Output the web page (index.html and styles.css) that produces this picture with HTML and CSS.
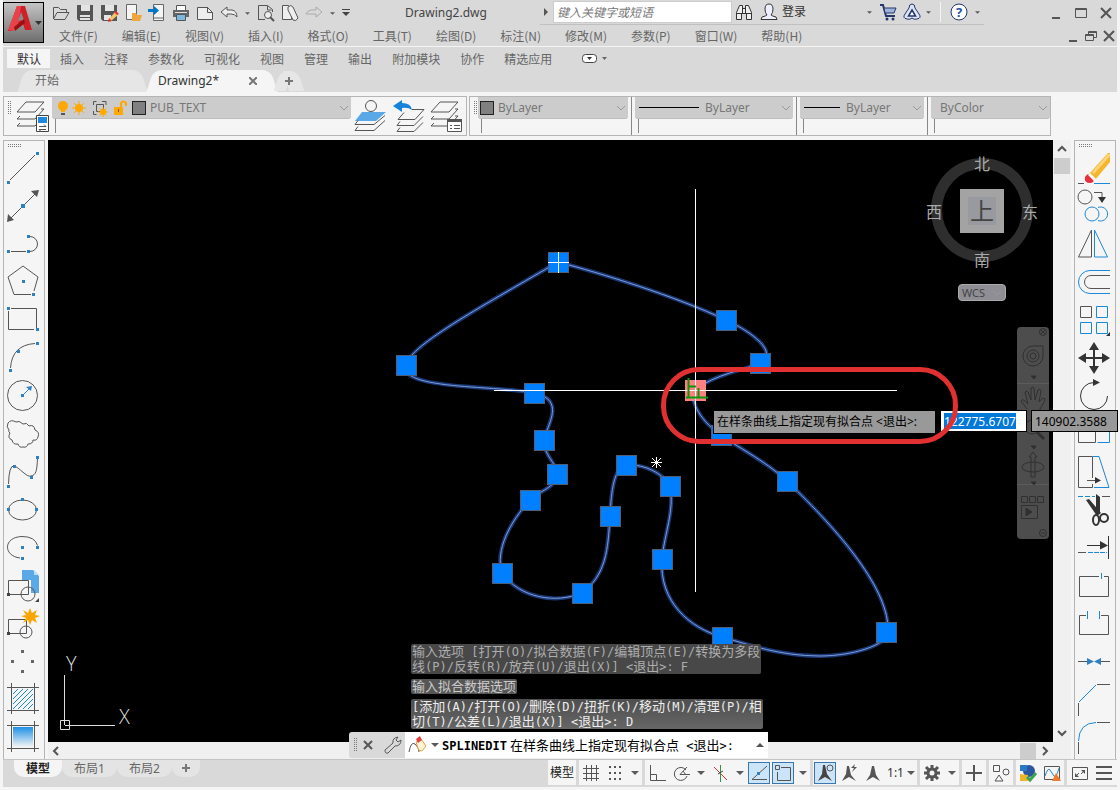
FILE: index.html
```
<!DOCTYPE html>
<html lang="zh-CN">
  <head>
    <meta charset="UTF-8" />
    <meta name="viewport" content="width=device-width, initial-scale=1.0" />
    <title>Drawing2.dwg</title>
    <link rel="stylesheet" href="styles.css">
  </head>
  <body>
    <!-- shared symbols -->
    <svg class="defs" aria-hidden="true">
      <symbol id="tri" viewBox="0 0 8 8"><path d="M0 2h8L4 6z" fill="#5a5a5a" /></symbol>
      <symbol id="chev" viewBox="0 0 10 10"><path d="M1 3l4 4 4-4" fill="none" stroke="#9a9a9a" /></symbol>
      <symbol id="grip" viewBox="0 0 21 21"><rect x=".5" y=".5" width="20" height="20" fill="#0080ff" stroke="#4f5f78" /></symbol>
      <symbol id="sheets" viewBox="0 0 34 34">
        <path class="ln" d="M10 3h18l-9 10H1zM4 17L1 20h18l9-10h-3M4 24l-3 3h18l9-10h-3" />
      </symbol>
      <linearGradient id="sky" x1="0" y1="0" x2="0" y2="1">
        <stop offset="0" stop-color="#1e90e8" />
        <stop offset="1" stop-color="#f5f5f5" />
      </linearGradient>
      <path id="spline" d="M558 262C600 273 675 296 726 320C750 331 780 352 760 363C745 370 715 374 695 390C690 397 696 418 721 435C735 446 763 459 787 481C840 532 890 590 888 632C888 645 852 656 820 656C780 656 750 645 722 637C690 628 659 602 662 559C664 535 675 510 670 486C663 474 646 464 626 465C612 468 611 500 610 516C608 550 606 575 582 593C555 604 520 598 502 573C495 550 510 522 530 500C540 490 556 488 557 474C557 463 543 455 544 440C545 430 562 407 545 397L534 393C495 385 398 390 406 365C409 345 490 302 558 262z" />
    </svg>

    <div class="app">
      <header class="top">
        <button class="logo" aria-label="应用程序菜单">
          <svg width="39" height="39" viewBox="0 0 39 39">
            <path d="M4 28L13 3h8l7 24h-7l-2-6-8 2-2 5z" fill="#cf2027" />
            <path d="M13 3h4l-3 20-5 5-5-1z" fill="#e8434a" />
            <path d="M17 9l3 8-6 1z" fill="#8a8a8a" />
            <path d="M10 24l10-8 1 4-10 8z" fill="#9c1015" />
            <path d="M31 18h7l-3.500 4z" fill="#333" />
          </svg>
        </button>

        <div class="top-rows">
          <div class="titlebar">
            <div class="quick">
              <button aria-label="打开"><svg class="i20" viewBox="0 0 20 20"><path class="ln" d="M2.500 16V4.500h5l2 2h6V9M2.500 16L6 9.500h12L14 16.500H3" /></svg></button>
              <button aria-label="保存"><svg class="i20" viewBox="0 0 20 20"><path d="M2 2h16v16H4l-2-2z" fill="#555" /><path d="M6 2h9v6H6zM5 12h10v5H5z" fill="#e4e4e4" /><path d="M5 14.500h10" stroke="#555" /></svg></button>
              <button aria-label="另存为"><svg class="i20" viewBox="0 0 20 20"><path d="M2 2h16v16H4l-2-2z" fill="#555" /><path d="M6 2h9v6H6zM5 12h7v5H5z" fill="#e4e4e4" /><path d="M10 16l6-7 3 3-7 6z" fill="#f5c36a" /><path d="M9 19l1-4 3 3zM15 9l2-1 3 3-2 1z" fill="#d33" /></svg></button>
              <button aria-label="从移动设备打开"><svg class="i20" viewBox="0 0 20 20"><path d="M3.500 1.500h10v15h-10z" fill="#f4f4f4" stroke="#666" /><path d="M9 18v-8h4l1 2h5l-2 6z" fill="#f0a63a" /></svg></button>
              <button aria-label="保存到移动设备"><svg class="i20" viewBox="0 0 20 20"><path d="M6.500 1.500h10v16h-10z" fill="#f4f4f4" stroke="#666" /><path d="M7 15h9" stroke="#666" /><path d="M1 6h6V3l5 4.500L7 12V9H1z" fill="#0078c8" /></svg></button>
              <button aria-label="打印"><svg class="i20" viewBox="0 0 20 20"><path d="M5.500 2.500h9v5h-9z" fill="#fff" stroke="#555" /><path d="M2 7h16v7H2z" fill="#666" /><path d="M4 9.500h12" stroke="#ddd" /><path d="M5.500 11.500h9v6h-9z" fill="#7db7e0" stroke="#555" /></svg></button>
              <button aria-label="新建"><svg class="i20" viewBox="0 0 20 20"><path d="M2.500 4.500h10l5 5v7h-15z" fill="#eee" stroke="#555" /><path class="ln" d="M12.500 4v5.500h5" /></svg></button>
              <button aria-label="放弃"><svg class="i20" viewBox="0 0 20 20"><path d="M2 9l6-5v3h5q5 1 5 7-2-3-6-3H8v3z" fill="#eee" stroke="#555" /></svg></button>
              <button class="dd" aria-label="放弃列表"><svg class="i5"><use href="#tri" /></svg></button>
              <button aria-label="打印预览"><svg class="i20" viewBox="0 0 20 20"><path d="M2.500 16V2.500h9l5 4V9M2 16.500h7M11.500 3v4h4" fill="none" stroke="#555" /><circle cx="12" cy="12" r="3.500" fill="#eee" stroke="#555" /><path d="M14 14l4 4" stroke="#555" stroke-width="2" /></svg></button>
              <button aria-label="发布"><svg class="i20" viewBox="0 0 20 20"><path d="M2.500 2.500h6l3 3v11h-9z" fill="#eee" stroke="#555" /><path d="M8 4q3-3 5 0l5 11q-2 4-5 2L8 7z" fill="#eee" stroke="#555" /></svg></button>
              <button aria-label="重做"><svg class="i20" viewBox="0 0 20 20"><path d="M18 9l-6-5v3H7Q3 8 2 11h10v3z" fill="none" stroke="#aaa" /></svg></button>
              <button class="dd" aria-label="重做列表"><svg class="i5"><use href="#tri" /></svg></button>
              <button class="dd" aria-label="自定义"><svg class="i8" viewBox="0 0 8 8"><path d="M0 0h8v1H0zM0 3h8L4 7z" fill="#444" /></svg></button>
            </div>
            <div class="title">Drawing2.dwg</div>
            <div class="info">
              <button class="dd" aria-label="展开搜索"><svg class="i8" viewBox="0 0 8 8"><path d="M2 0l4 4-4 4z" fill="#555" /></svg></button>
              <input class="search" type="text" aria-label="搜索" placeholder="键入关键字或短语" />
              <button aria-label="查找"><svg class="i20" viewBox="0 0 20 20"><path d="M5.500 3.500h3v3h3v-3h3l3 7v7h-5v-6h-5v6h-5v-7z" fill="#eee" stroke="#333" /><path d="M3 11.500h5M12 11.500h5M8.500 6v5M11.500 6v5" stroke="#333" /></svg></button>
              <button class="login"><svg class="i20" viewBox="0 0 20 20"><path d="M6 7q0-5 4-5t4 5q0 4-2 6 1 1 5 2l1 2.500H2L3 15q4-1 5-2-2-2-2-6z" fill="#eef" stroke="#333" /></svg>登录</button>
              <button class="dd login-dd" aria-label="帐户"><svg class="i5"><use href="#tri" /></svg></button>
              <button aria-label="商店"><svg class="i20" viewBox="0 0 20 20"><path d="M2 3h3l3 11h9" fill="none" stroke="#24366b" stroke-width="2" /><path d="M6 6h12l-2 5H7z" fill="#9fb2dc" stroke="#24366b" /><circle cx="9" cy="17" r="1.500" fill="#24366b" /><circle cx="15" cy="17" r="1.500" fill="#24366b" /></svg></button>
              <button aria-label="Autodesk App"><svg class="i20" viewBox="0 0 20 20"><path d="M10 2q3 0 3 4l4 6q3 4-2 5-3 1-5-1-2 2-5 1-5-1-2-5l4-6q0-4 3-4z" fill="#dbe3f5" stroke="#24366b" /><path d="M10 8l3.500 6h-7z" fill="#fff" stroke="#24366b" stroke-width="1.500" /></svg></button>
              <button class="dd narrow" aria-label="应用列表"><svg class="i5"><use href="#tri" /></svg></button>
              <span class="bar"></span>
              <button aria-label="帮助"><svg class="i20" viewBox="0 0 20 20"><circle cx="10" cy="10" r="8" fill="#fff" stroke="#24366b" /><text class="qmark" x="10" y="15" text-anchor="middle">?</text></svg></button>
              <button class="dd" aria-label="帮助列表"><svg class="i5"><use href="#tri" /></svg></button>
            </div>
            <div class="win">
              <button aria-label="最小化"><svg class="i14" viewBox="0 0 14 14"><path class="thick" d="M3 12h8" /></svg></button>
              <button aria-label="最大化"><svg class="i14" viewBox="0 0 14 14"><path class="ln" d="M1.500 2.500h11v9h-11zM1.500 3.500h11" /></svg></button>
              <button aria-label="关闭"><svg class="i14" viewBox="0 0 14 14"><path class="thick" d="M2 2l10 10M12 2L2 12" /></svg></button>
            </div>
          </div>

          <nav class="menubar">
            <a href="#">文件(F)</a>
            <a href="#">编辑(E)</a>
            <a href="#">视图(V)</a>
            <a href="#">插入(I)</a>
            <a href="#">格式(O)</a>
            <a href="#">工具(T)</a>
            <a href="#">绘图(D)</a>
            <a href="#">标注(N)</a>
            <a href="#">修改(M)</a>
            <a href="#">参数(P)</a>
            <a href="#">窗口(W)</a>
            <a href="#">帮助(H)</a>
            <div class="win small">
              <button aria-label="最小化图形"><svg class="i14" viewBox="0 0 14 14"><path class="thick" d="M3 12h8" /></svg></button>
              <button aria-label="还原图形"><svg class="i14" viewBox="0 0 14 14"><path class="ln" d="M4.500 5V2.500h8v6H10M1.500 5.500h8v6h-8zM1.500 6.500h8M4.500 3.500h8" /></svg></button>
              <button aria-label="关闭图形"><svg class="i14" viewBox="0 0 14 14"><path class="thick" d="M2 2l10 10M12 2L2 12" /></svg></button>
            </div>
          </nav>
        </div>
      </header>

      <nav class="ribbon">
        <a class="on" href="#">默认</a>
        <a href="#">插入</a>
        <a href="#">注释</a>
        <a href="#">参数化</a>
        <a href="#">可视化</a>
        <a href="#">视图</a>
        <a href="#">管理</a>
        <a href="#">输出</a>
        <a href="#">附加模块</a>
        <a href="#">协作</a>
        <a href="#">精选应用</a>
        <button class="ribbon-min" aria-label="最小化功能区">
          <svg width="26" height="10" viewBox="0 0 26 10"><rect x=".5" y=".5" width="14" height="8" rx="3" fill="#fff" stroke="#444" /><path d="M5 3h5L7.500 6z" fill="#333" /><path d="M20 3h5l-2.500 3z" fill="#666" /></svg>
        </button>
      </nav>

      <nav class="files">
        <a class="file start" href="#">开始</a>
        <a class="file on" href="#">Drawing2*</a>
        <button class="file-x" aria-label="关闭文件"><svg class="i8" viewBox="0 0 8 8"><path class="thick soft" d="M0 0l8 8M8 0L0 8" /></svg></button>
        <button class="file add" aria-label="新图形"><svg class="i8" viewBox="0 0 8 8"><path class="thick soft" d="M4 0v8M0 4h8" /></svg></button>
      </nav>

      <div class="props">
        <div class="panel layers">
          <span class="dots v"></span>
          <button aria-label="图层特性">
            <svg class="i34" viewBox="0 0 34 34"><use href="#sheets" width="34" height="34" /><path d="M20.500 16.500h12v16h-12z" fill="#fff" stroke="#444" /><path d="M22 18h9v6h-9z" fill="#1e88e0" /><path class="ln" d="M23 27.500h7l-2-2M30 30.500h-7l2 2" /></svg>
          </button>
          <div class="drop layer">
            <div class="drop-face">
              <svg width="74" height="18" viewBox="0 0 74 18">
                <circle cx="9" cy="6" r="5" fill="#ffa800" /><path d="M7 10h4v2H7z" fill="#ffa800" /><path d="M7 13h4v2H7z" fill="#555" />
                <circle cx="25" cy="8" r="4" fill="#ffa800" /><path d="M25 1v14M18 8h14M20 3l10 10M30 3L20 13" stroke="#ffa800" />
                <path class="ln" d="M39.500 5V1.500h3M48 1.500h4V5M39.500 11v3.500h3M42.500 4.500h7v7h-7z" /><circle cx="49" cy="12" r="3" fill="#ffa800" /><path d="M49 7v10M44 12h10M45.500 8.500l7 7M52.500 8.500l-7 7" stroke="#ffa800" />
                <path d="M60 7h9v8h-9z" fill="#ffa800" /><path d="M67 7V3q2-3 5 0v3" fill="none" stroke="#ffa800" stroke-width="2" /><path d="M64 9h1v3h-1z" fill="#855" />
              </svg>
              <span class="swatch"></span>
              <select aria-label="图层"><option>PUB_TEXT</option></select>
              <svg class="i10"><use href="#chev" /></svg>
            </div>
          </div>
          <button aria-label="置为当前">
            <svg class="i34" viewBox="0 0 34 34"><path d="M8 13h24l-10 9H1z" fill="#5aa9e6" /><path class="ln" d="M4 21.500l-3 4h19l11-9M4 27.500l-3 4h19l11-10" /><circle cx="17" cy="7" r="5.500" fill="#f5f5f5" stroke="#555" /></svg>
          </button>
          <button aria-label="上一个图层">
            <svg class="i34" viewBox="0 0 34 34"><path class="ln" d="M20 10.500h12l-9 10H6l6-7M8 22.500l-3 4h17l9-9M8 28.500l-3 4h17l9-9" /><path d="M1 7l9-6v3q9 0 10 7-4-3-10-2v4z" fill="#1583dc" /></svg>
          </button>
          <button aria-label="图层状态">
            <svg class="i34" viewBox="0 0 34 34"><use href="#sheets" width="34" height="34" /><path d="M17.500 20.500h14v12h-14z" fill="#fff" stroke="#555" /><path d="M17 20h15v3H17z" fill="#555" /><path d="M20 26.500h2M20 29.500h2M24 26.500h6M24 29.500h6" stroke="#555" /></svg>
          </button>
        </div>

        <div class="panel styles">
          <span class="dots v"></span>
          <div class="drop color">
            <div class="drop-face"><span class="swatch"></span><select aria-label="颜色"><option>ByLayer</option></select><svg class="i10"><use href="#chev" /></svg></div>
          </div>
          <div class="drop ltype">
            <div class="drop-face"><span class="rule"></span><select aria-label="线型"><option>ByLayer</option></select><svg class="i10"><use href="#chev" /></svg></div>
          </div>
          <div class="drop lweight">
            <div class="drop-face"><span class="rule short"></span><select aria-label="线宽"><option>ByLayer</option></select><svg class="i10"><use href="#chev" /></svg></div>
          </div>
          <div class="drop pstyle">
            <div class="drop-face"><select aria-label="打印样式"><option>ByColor</option></select><svg class="i10"><use href="#chev" /></svg></div>
          </div>
        </div>
      </div>

      <main class="work">
        <div class="tools left">
          <span class="dots h"></span>
          <button aria-label="直线"><svg viewBox="0 0 34 38"><path class="ln" d="M4 31L29 6" /><path class="pt" d="M1 32h3v3H1zM30 3h3v3h-3z" /></svg></button>
          <button aria-label="构造线"><svg viewBox="0 0 34 38"><path class="ln" d="M3 33L30 6" /><path d="M1 35l1-8 6 6zM33 3l-8 1 6 6z" fill="#555" /><path class="pt" d="M15 17h4v4h-4z" /></svg></button>
          <button aria-label="多段线"><svg viewBox="0 0 34 38"><path class="ln" d="M5 26.500h15M24 11.500a7.500 7.500 0 0 1 0 15" /><path class="pt" d="M1 25h3v3H1zM21 25h3v3h-3zM21 10h3v3h-3z" /></svg></button>
          <button aria-label="多边形"><svg viewBox="0 0 34 38"><path class="ln" d="M17 3l15 11-4 14M25 31.500H8L2 14 17 3" /><path class="pt" d="M16 17h3v3h-3zM26 30h3v3h-3z" /></svg></button>
          <button aria-label="矩形"><svg viewBox="0 0 34 38"><path class="ln" d="M5 7.500h25.500V27M28 28.500H2.500V10" /><path class="pt" d="M1 6h3v3H1zM30 27h3v3h-3z" /></svg></button>
          <button aria-label="圆弧"><svg viewBox="0 0 34 38"><path class="ln" d="M29 4.500Q6 6 4.500 29" /><path class="pt" d="M30 3h3v3h-3zM11 11h3v3h-3zM3 30h3v3H3z" /></svg></button>
          <button aria-label="圆"><svg viewBox="0 0 34 38"><circle class="ln" cx="16.500" cy="18.500" r="15" /><path class="bl" d="M17 18l6-6" /><path class="pt" d="M15 17h3v3h-3zM26 9l-1 5-5-4z" /></svg></button>
          <button aria-label="修订云线"><svg viewBox="0 0 34 38"><path class="ln" d="M3 15Q0 12 2 8q3-4 8-1 3-2 7 2 4-2 6 2 5-2 6 4 5 2 3 7-1 4-5 3 0 4-5 4-1 4-5 3-4 1-5-3-5 1-6-4-5-2-2-7-2-1-1-3z" /></svg></button>
          <button aria-label="样条曲线"><svg viewBox="0 0 34 38"><path class="ln" d="M2.500 31Q3 12 8 13c5 1 13 12 17 10 5-1 6-5 6.500-18" /><path class="pt" d="M1 32h3v3H1zM7 12h3v3H7zM24 23h3v3h-3zM30 3h3v3h-3z" /></svg></button>
          <button aria-label="椭圆"><svg viewBox="0 0 34 38"><ellipse class="ln" cx="16.500" cy="19" rx="14" ry="10" /><path class="pt" d="M1 17h3v3H1zM15 7h3v3h-3zM29 17h3v3h-3z" /></svg></button>
          <button aria-label="椭圆弧"><svg viewBox="0 0 34 38"><path class="ln" d="M14 29C-3 27-3 8 16 7.500q13 0 15.500 9" /><path class="pt" d="M15 17h3v3h-3zM30 17h3v3h-3zM15 28h3v3h-3z" /></svg></button>
          <button aria-label="插入块"><svg viewBox="0 0 34 38"><path d="M16 3h11l6 6v17h-8V13h-9z" fill="#5aa9e6" /><path d="M28 3l5 5h-5z" fill="#bcdcf5" /><path class="ln" d="M2.500 13.500h20v14h-20z" /><circle class="ln" cx="22" cy="27" r="7" /><path d="M1 26h3v3H1zM33 31v4h-4z" fill="#444" /></svg></button>
          <button aria-label="创建块"><svg viewBox="0 0 34 38"><path class="ln" d="M2.500 14.500h18v14h-18z" /><circle class="ln" cx="20" cy="27" r="6" /><path d="M1 27h3v3H1z" fill="#444" /><path d="M24 3l2 5 5-3-2 5 5 1-5 2 2 5-5-3-2 5-2-5-5 3 3-5-5-2 5-1-3-5 5 3z" fill="#f9a602" /></svg></button>
          <button aria-label="点"><svg viewBox="0 0 34 38"><path d="M15 7h3v3h-3zM5 17h3v3H5zM25 17h3v3h-3zM15 27h3v3h-3z" fill="#666" /></svg></button>
          <button aria-label="图案填充"><svg viewBox="0 0 34 38"><path class="ln" d="M5.500 2v31M28.500 2v31M1 6.500h32M1 29.500h32" /><path class="bl" d="M7 13l5-5M7 18L17 8M7 23L22 8M7 28L27 8M12 28l15-15M17 28l10-10M22 28l5-5" /></svg></button>
          <button aria-label="渐变色"><svg viewBox="0 0 34 38"><path d="M7 8h20v20H7z" fill="url(#sky)" /><path class="ln" d="M5.500 2v31M28.500 2v31M1 6.500h32M1 29.500h32" /></svg></button>
        </div>

        <div class="view">
          <div class="canvas">
            <svg class="drawing" width="1005" height="602" viewBox="48 140 1005 602">
              <use href="#spline" class="glow" />
              <use href="#spline" class="core" />
              <g>
                <use href="#grip" x="548" y="252" width="21" height="21" />
                <use href="#grip" x="716" y="310" width="21" height="21" />
                <use href="#grip" x="750" y="353" width="21" height="21" />
                <use href="#grip" x="711" y="425" width="21" height="21" />
                <use href="#grip" x="777" y="471" width="21" height="21" />
                <use href="#grip" x="876" y="622" width="21" height="21" />
                <use href="#grip" x="712" y="627" width="21" height="21" />
                <use href="#grip" x="652" y="549" width="21" height="21" />
                <use href="#grip" x="660" y="476" width="21" height="21" />
                <use href="#grip" x="616" y="455" width="21" height="21" />
                <use href="#grip" x="600" y="506" width="21" height="21" />
                <use href="#grip" x="572" y="583" width="21" height="21" />
                <use href="#grip" x="492" y="563" width="21" height="21" />
                <use href="#grip" x="520" y="490" width="21" height="21" />
                <use href="#grip" x="547" y="464" width="21" height="21" />
                <use href="#grip" x="534" y="430" width="21" height="21" />
                <use href="#grip" x="524" y="383" width="21" height="21" />
                <use href="#grip" x="396" y="355" width="21" height="21" />
              </g>
              <path d="M685 380h21v21h-21z" fill="#ff8080" />
              <g fill="none" stroke="#fff">
                <path d="M695.500 189v403M494 390.500h403M548 262.500h21M558.500 252v21" />
                <path d="M656.500 457v11M651 462.500h11M652 458l9 9M661 458l-9 9" />
                <path d="M64.500 675v50M65 725.500h50M60.500 720.500h9v9h-9z" stroke="#ddd" />
              </g>
              <path d="M688.500 378v19M686 397.500h22M689 386.500h7M698.500 388v10" fill="none" stroke="#0a960a" stroke-width="2" />
              <text class="ucs" x="66" y="671">Y</text>
              <text class="ucs" x="119" y="724">X</text>
            </svg>

            <div class="cube">
              <span class="n">北</span>
              <span class="w">西</span>
              <button class="face"><span>上</span></button>
              <span class="e">东</span>
              <span class="s">南</span>
            </div>
            <button class="wcs">WCS <svg class="i10"><use href="#chev" /></svg></button>

            <div class="navbar">
              <svg width="32" height="212" viewBox="0 0 32 212" fill="none" stroke="#303030">
                <circle cx="26" cy="5" r="3.500" /><path d="M24 3l4 4M28 3l-4 4" /><path d="M0 56.500h32M0 157.500h32" stroke="#5c5c5c" />
                <path d="M16 19h10v10a10 10 0 1 1-10-10z" /><circle cx="16" cy="29" r="6" /><circle cx="16" cy="29" r="3" />
                <path d="M14 49h5l-2 3zM14 119h5l-2 3z" fill="#303030" />
                <path d="M10 82l-6-8q1-3 4 0l3 3-3-12q2-2 3 0l3 8 0-12q2-2 3 0l1 12 3-10q2-2 3 1l-2 11 4-4q2 0 2 2l-6 11" />
                <circle cx="15" cy="100" r="7" /><path d="M20 105l7 7" stroke-width="3" />
                <ellipse cx="16" cy="140" rx="11" ry="5" /><path d="M14 150v-20h-2l4-5 4 5h-2v20z" />
                <path d="M14 155h5l-2 3z" fill="#303030" />
                <path d="M4.500 169.500h6v6h-6zM12.500 169.500h6v6h-6zM20.500 169.500h6v6h-6zM4.500 178.500h16v13h-16z" /><path d="M9 181l6 4-6 4z" fill="#303030" />
                <circle cx="26" cy="206" r="3.500" /><path d="M24 206h4" />
              </svg>
            </div>
          </div>
          <div class="scroll v">
            <svg class="i10" viewBox="0 0 10 10"><path class="thick" d="M1 7l4-4 4 4" /></svg>
            <span class="thumb"></span>
            <svg class="i10 end" viewBox="0 0 10 10"><path class="thick" d="M1 3l4 4 4-4" /></svg>
          </div>
          <div class="scroll h">
            <svg class="i10" viewBox="0 0 10 10"><path class="thick" d="M7 1L3 5l4 4" /></svg>
            <span class="thumb"></span>
            <svg class="i10" viewBox="0 0 10 10"><path class="thick" d="M3 1l4 4-4 4" /></svg>
          </div>
        </div>

        <div class="tools right">
          <span class="dots h"></span>
          <button aria-label="删除"><svg viewBox="0 0 34 38"><path d="M12 25L31 4h2v9L18 31z" fill="#f7b52e" /><path d="M15 23L31 5h2v2L17 25z" fill="#fdd77c" /><path d="M8 28q3-5 6-2l3 4q0 4-4 4-6 0-5-6z" fill="#e8303a" /><path d="M11 26l2-2 6 6-2 2z" fill="#fff" /><path class="ln" d="M1 34.500h6" /><path class="bl" d="M17 34.500h16" /></svg></button>
          <button aria-label="复制"><svg viewBox="0 0 34 38"><circle class="ln" cx="8" cy="10" r="7" /><path class="ln" d="M17 5.500h8V11" /><path d="M21 10h8l-4 6z" fill="#333" /><circle class="bl" cx="15" cy="27" r="7" /><path class="bl" d="M21 20.500a7 7 0 1 1 0 13" /></svg></button>
          <button aria-label="镜像"><svg viewBox="0 0 34 38"><path class="ln" d="M14.500 5v27H1.500z" /><path class="bl" d="M17.500 5v27h13z" /></svg></button>
          <button aria-label="偏移"><svg viewBox="0 0 34 38"><path class="bl" d="M33 7.500H13a11.500 11.500 0 0 0 0 23h20" /><path class="ln" d="M33 12.500H14a6.500 6.500 0 0 0 0 13h19" /></svg></button>
          <button aria-label="阵列"><svg viewBox="0 0 34 38"><path class="ln" d="M3.500 5.500h11v11h-11z" /><path class="bl" d="M19.500 5.500h11v11h-11zM3.500 21.500h11v11h-11zM19.500 21.500h11v11h-11z" /><path d="M33 31v4h-4z" fill="#333" /></svg></button>
          <button aria-label="移动"><svg viewBox="0 0 34 38"><path d="M17 3l5 8h-4v7h7v-4l8 5-8 5v-4h-7v7h4l-5 8-5-8h4v-7H9v4l-8-5 8-5v4h7v-7h-4z" fill="#333" /></svg></button>
          <button aria-label="旋转"><svg viewBox="0 0 34 38"><path class="ln dark" d="M17 5.500A13.500 13.500 0 1 0 30.500 19" /><path d="M16 2l7 3.500L16 9z" fill="#333" /></svg></button>
          <button aria-label="缩放"><svg viewBox="0 0 34 38"><path class="bl" d="M2.500 3.500h30v24h-12" /><path class="ln" d="M1.500 10.500h17v17h-17z" /></svg></button>
          <button aria-label="拉伸"><svg viewBox="0 0 34 38"><path class="ln" d="M15.500 25V3.500h-14v31h14V31M10 27.500h8" /><path class="bl" d="M16 3.500h6l10 31H17" /><path d="M18 24l6 3.500-6 3z" fill="#333" /></svg></button>
          <button aria-label="修剪"><svg viewBox="0 0 34 38"><path class="bl" d="M1 5.500h17" stroke-dasharray="5 2" /><path class="ln" d="M25 5.500h8" /><path d="M9 9l3-1 12 14-4 3zM19 3l4 3v16l-4 2z" fill="#333" /><ellipse cx="19" cy="29" rx="3" ry="5" fill="none" stroke="#333" stroke-width="2" /><ellipse cx="27" cy="27" rx="4" ry="4" fill="none" stroke="#333" stroke-width="2" /></svg></button>
          <button aria-label="延伸"><svg viewBox="0 0 34 38"><path class="ln dark" d="M10 16.500h14M31.500 7v23" /><path d="M23 12l8 4.500-8 4z" fill="#333" /><path class="ln" d="M1 23.500h8" /><path class="bl" d="M11 23.500h19" stroke-dasharray="5 1" /></svg></button>
          <button aria-label="打断于点"><svg viewBox="0 0 34 38"><path class="ln" d="M22 9.500H2.500v20h29v-20H27" /><path class="bl" d="M24.500 6v6" /></svg></button>
          <button aria-label="打断"><svg viewBox="0 0 34 38"><path class="ln" d="M9 10.500H2.500v19h29v-19H24" /><path class="bl" d="M10.500 6v8M22.500 6v8" /></svg></button>
          <button aria-label="合并"><svg viewBox="0 0 34 38"><path class="ln" d="M1 18.500h9M24 18.500h9" /><path class="pt" d="M10 15l7 3.500-7 3.500zM24 15l-7 3.500 7 3.500z" /></svg></button>
          <button aria-label="倒角"><svg viewBox="0 0 34 38"><path class="ln" d="M20 3.500h13M1.500 22v13" /><path class="bl" d="M2 21L19 4" /></svg></button>
          <button aria-label="圆角"><svg viewBox="0 0 34 38"><path class="ln" d="M20 3.500h13M1.500 23v12" /><path class="bl" d="M1.500 22Q2 4 19 3.500" /></svg></button>
        </div>

        <!-- dynamic input beside the cursor -->
        <div class="dyn">
          <label class="prompt" for="dyn-x">在样条曲线上指定现有拟合点 &lt;退出&gt;:</label>
          <input id="dyn-x" class="coord active" type="text" value="122775.6707" />
          <input class="coord" type="text" aria-label="Y" value="140902.3588" />
        </div>
        <div class="ring"></div>

        <div class="history">
          <p class="old">输入选项<kbd> [</kbd>打开<kbd>(O)/</kbd>拟合数据<kbd>(F)/</kbd>编辑顶点<kbd>(E)/</kbd>转换为多段<br />线<kbd>(P)/</kbd>反转<kbd>(R)/</kbd>放弃<kbd>(U)/</kbd>退出<kbd>(X)] &lt;</kbd>退出<kbd>&gt;: F</kbd></p>
          <p class="mid">输入拟合数据选项</p>
          <p><kbd>[</kbd>添加<kbd>(A)/</kbd>打开<kbd>(O)/</kbd>删除<kbd>(D)/</kbd>扭折<kbd>(K)/</kbd>移动<kbd>(M)/</kbd>清理<kbd>(P)/</kbd>相<br />切<kbd>(T)/</kbd>公差<kbd>(L)/</kbd>退出<kbd>(X)] &lt;</kbd>退出<kbd>&gt;: D</kbd></p>
        </div>

        <div class="cmd">
          <span class="dots v"></span>
          <button aria-label="关闭命令行"><svg class="i10" viewBox="0 0 10 10"><path class="thick" d="M1 1l8 8M9 1L1 9" /></svg></button>
          <button class="wrench" aria-label="自定义命令行"><svg class="i20" viewBox="0 0 20 20"><path class="ln" d="M3 15l8-7q-1-5 5-6l-2 3 2 2 3-2q0 6-6 6l-7 7q-3 1-3-3z" /></svg></button>
          <div class="cmd-line">
            <svg class="i20" viewBox="0 0 20 20"><path class="ln" d="M1 17Q3 6 7 9t4 8" /><path d="M8 7l5-3 5 7-4 5q-4 0-4-3z" fill="#fff3d6" stroke="#e0a040" /><path d="M8 4l4-3 2 4-4 3z" fill="#e04040" /></svg>
            <svg class="i8"><use href="#tri" /></svg>
            <label for="cmd"><b>SPLINEDIT</b> 在样条曲线上指定现有拟合点<kbd> &lt;</kbd>退出<kbd>&gt;:</kbd></label>
            <input id="cmd" type="text" />
            <svg class="i8" viewBox="0 0 8 8"><path d="M0 6h8L4 2z" fill="#555" /></svg>
          </div>
        </div>
      </main>

      <footer class="status">
        <nav class="layouts">
          <a class="on" href="#">模型</a>
          <a href="#">布局1</a>
          <a href="#">布局2</a>
          <a href="#" aria-label="新建布局"><svg class="i8" viewBox="0 0 8 8"><path class="thick soft" d="M4 0v8M0 4h8" /></svg></a>
        </nav>
        <div class="group"><button class="model">模型</button></div>
        <div class="group">
          <button aria-label="栅格"><svg class="i20" viewBox="0 0 20 20"><path class="ln" d="M5.500 2v16M10.500 2v16M15.500 2v16M2 5.500h16M2 10.500h16M2 15.500h16" /></svg></button>
          <button aria-label="捕捉"><svg class="i20" viewBox="0 0 20 20"><path d="M4 4h13M4 10h13M4 16h13" stroke="#555" stroke-width="2" stroke-dasharray="2 3" /></svg></button>
          <button class="dd" aria-label="捕捉设置"><svg class="i8"><use href="#tri" /></svg></button>
        </div>
        <div class="group">
          <button aria-label="正交"><svg class="i20" viewBox="0 0 20 20"><path class="ln" d="M3.500 2v15.500H19M3 11.500h6.500V17" /></svg></button>
          <button aria-label="极轴"><svg class="i20" viewBox="0 0 20 20"><path class="ln" d="M15 7a6.500 6.500 0 1 0 1 6M9 11.500L16 4M9 11.500h10M12 8l3 4" /></svg></button>
          <button class="dd" aria-label="极轴设置"><svg class="i8"><use href="#tri" /></svg></button>
          <button aria-label="等轴测"><svg class="i20" viewBox="0 0 20 20"><path d="M4 4l13 13" stroke="#c33" /><path d="M10.500 2v17" stroke="#2a9a4a" /><path d="M8 11l5-3" stroke="#444" /></svg></button>
          <button class="dd" aria-label="等轴测设置"><svg class="i8"><use href="#tri" /></svg></button>
          <button class="lit" aria-label="对象捕捉追踪"><svg class="i20" viewBox="0 0 20 20"><path class="ln" d="M18 3L3 16.500h15" /><path class="pt" d="M8 9h3v3H8z" /></svg></button>
          <button class="lit" aria-label="对象捕捉"><svg class="i20" viewBox="0 0 20 20"><path class="ln" d="M8 4.500h9.500v13H4.500V9M2.500 2.500h4v4h-4z" /></svg></button>
          <button class="dd" aria-label="捕捉模式"><svg class="i8"><use href="#tri" /></svg></button>
        </div>
        <div class="group">
          <button class="lit" aria-label="注释可见性"><svg class="i20" viewBox="0 0 20 20"><path d="M8 2h2l2 9 5 7-7-4-7 4 4-7z" fill="#444" /><circle class="ln" cx="15" cy="5" r="3" /></svg></button>
          <button aria-label="自动缩放"><svg class="i20" viewBox="0 0 20 20"><path d="M8 3h2l2 9 5 6-7-4-7 4 4-7zM16 1l-4 4h3l-2 4 5-5h-3z" fill="#555" /></svg></button>
          <button aria-label="注释比例"><svg class="i20" viewBox="0 0 20 20"><path d="M9 3h2l2 9 4 6-7-4-7 4 4-6z" fill="#555" /></svg></button>
          <button class="scale">1:1<svg class="i8"><use href="#tri" /></svg></button>
        </div>
        <div class="group">
          <button aria-label="工作空间"><svg class="i20" viewBox="0 0 20 20"><circle cx="10" cy="10" r="4" fill="none" stroke="#555" stroke-width="3" /><path d="M10 2v4M10 14v4M2 10h4M14 10h4M4 4l3 3M13 13l3 3M16 4l-3 3M7 13l-3 3" stroke="#555" stroke-width="3" /></svg></button>
          <button class="dd" aria-label="工作空间列表"><svg class="i8"><use href="#tri" /></svg></button>
        </div>
        <div class="group"><button aria-label="注释监视器"><svg class="i20" viewBox="0 0 20 20"><path class="thick" d="M10 2v16M2 10h16" /></svg></button></div>
        <div class="group"><button aria-label="隔离对象"><svg class="i20" viewBox="0 0 20 20"><path class="ln" d="M2.500 2.500h6v6h-6zM8 12l4 6H4z" /><circle class="ln" cx="15" cy="9" r="3" /></svg></button></div>
        <div class="group">
          <button aria-label="硬件加速"><svg class="i20" viewBox="0 0 20 20"><circle cx="11" cy="8" r="6" fill="#2b57a0" /><path d="M2 2h7v6H2z" fill="#2a78c8" /><path d="M2 11l8 1v6H2z" fill="#f0b429" /><path d="M9 14l3 3 6-7" fill="none" stroke="#3fa34d" stroke-width="3" /></svg></button>
          <button aria-label="性能"><svg class="i20" viewBox="0 0 20 20"><path class="ln" d="M2.500 3.500h15v13h-15z" /><path class="bl" d="M3 13q3-9 5-6t4 6 5-8" /><path d="M14 10l5 8h-9z" fill="#ee7b30" /></svg></button>
        </div>
        <div class="group last">
          <button aria-label="全屏显示"><svg class="i20" viewBox="0 0 20 20"><path class="ln" d="M2.500 4.500h15v12h-15zM5 14l4-4M15 7l-4 4" /><path d="M5 10v4h4zM11 7h4v4z" fill="#555" /></svg></button>
          <button aria-label="自定义"><svg class="i20" viewBox="0 0 20 20"><path class="thick" d="M2 4h16M2 10h16M2 16h16" /></svg></button>
        </div>
      </footer>
    </div>
  </body>
</html>
```
FILE: styles.css
```
:root {
  --chrome: #d9d9d9;
  --light: #f5f5f5;
  --edge: #b5b5b5;
  --ink: #555;
  --blue: #1e88d8;
}

* {
  box-sizing: border-box;
}

body {
  margin: 0;
  background: var(--light);
  color: #666;
  font: 12px/16px "Noto Sans", "Noto Sans CJK SC", sans-serif;
}

button,
input,
select {
  margin: 0;
  padding: 0;
  border: 0;
  background: none;
  color: inherit;
  font: inherit;
}

button {
  display: flex;
  align-items: center;
  justify-content: center;
}

a {
  color: inherit;
  text-decoration: none;
}

svg {
  display: block;
  flex: none;
}

.defs {
  position: absolute;
  width: 0;
  height: 0;
}

/* icon strokes */
.ln {
  fill: none;
  stroke: var(--ink);
}
.ln.dark {
  stroke: #333;
}
.bl {
  fill: none;
  stroke: var(--blue);
}
.pt {
  fill: #2f80c0;
}
.thick {
  fill: none;
  stroke: var(--ink);
  stroke-width: 2;
}
.thick.soft {
  stroke: #777;
}

.i5 {
  width: 5px;
  height: 5px;
}
.i8 {
  width: 8px;
  height: 8px;
}
.i10 {
  width: 10px;
  height: 10px;
}
.i14 {
  width: 14px;
  height: 14px;
}
.i20 {
  width: 20px;
  height: 20px;
}
.i34 {
  width: 34px;
  height: 34px;
}

/* dotted drag handles */
.dots {
  display: block;
  flex: none;
  background: conic-gradient(#777 25%, transparent 0) 0 0 / 2px 2px;
}
.dots.v {
  width: 4px;
  height: 14px;
}
.dots.h {
  width: 14px;
  height: 3px;
  margin: 3px 1px 2px;
}

.app {
  display: flex;
  flex-direction: column;
  min-height: 100vh;
  padding: 0 3px 3px;
}

/* header */
.top {
  display: flex;
  background: var(--chrome);
  border-bottom: 1px solid #f4f4f4;
}
.logo {
  width: 41px;
  height: 41px;
  margin: 2px 5px 3px 0;
  border: 1px solid #000;
  background: linear-gradient(#c4c4c4, #6e6e6e);
}
.top-rows {
  flex: 1;
}
.titlebar {
  display: flex;
  height: 26px;
}
.quick,
.info,
.win {
  display: flex;
  align-items: center;
}
.quick button,
.info button {
  width: 24px;
  height: 22px;
}
.quick .dd,
.info .dd {
  width: 13px;
}
.title {
  flex: 1;
  color: #444;
  text-align: center;
  line-height: 25px;
}
.info {
  height: 25px;
  border-bottom: 1px solid #c0c0c0;
}
.search {
  width: 179px;
  height: 22px;
  padding: 0 3px;
  background: #fff;
  border: 1px solid #ccc;
}
.search::placeholder {
  color: #777;
  font-style: italic;
}
.info .login {
  width: auto;
  padding: 0 3px;
  gap: 3px;
  color: #333;
}
.info .login-dd {
  margin-left: 54px;
}
.info .narrow {
  width: 8px;
}
.bar {
  width: 1px;
  height: 20px;
  margin: 0 6px 0 8px;
  background: #f4f4f4;
}
.qmark {
  fill: #1f4fa5;
  font: bold 13px "Noto Sans", sans-serif;
}
.win {
  gap: 11px;
  margin-left: 65px;
  padding-right: 4px;
}
.win.small {
  gap: 4px;
  margin-left: auto;
  padding-right: 1px;
}
.menubar {
  display: flex;
  gap: 24px;
  padding-left: 10px;
  line-height: 20px;
}
.menubar,
.ribbon {
  font-family: "Noto Sans CJK SC", sans-serif;
}

.ribbon {
  display: flex;
  padding: 2px 4px 0;
  background: var(--chrome);
  line-height: 19px;
}
.ribbon a {
  padding: 0 10px;
}
.ribbon .on {
  padding: 0 9px 0 10px;
  background: var(--light);
  color: #333;
}
.ribbon-min {
  margin-left: 20px;
}

/* drawing tabs */
.files {
  display: flex;
  align-items: flex-end;
  height: 24px;
  padding-left: 15px;
  background: var(--chrome);
  line-height: 22px;
}
.file {
  position: relative;
  z-index: 0;
  padding: 0 17px;
}
.file::before,
.file::after {
  content: "";
  position: absolute;
  z-index: -1;
  top: 0;
  bottom: 0;
  background: #e6e6e6;
}
.file::before {
  left: 3px;
  right: 50%;
  border-radius: 8px 0 0 0;
  transform: skewX(-18deg);
}
.file::after {
  left: 40%;
  right: 3px;
  border-radius: 0 8px 0 0;
  transform: skewX(18deg);
}
.file.start {
  width: 129px;
}
.file.on {
  width: 130px;
  padding-left: 11px;
  color: #333;
}
.file.on::before,
.file.on::after {
  background: var(--light);
}
.file-x {
  z-index: 1;
  width: 8px;
  height: 22px;
  margin: 0 17px 0 -28px;
}
.file.add {
  height: 20px;
  padding: 0 11px;
  margin-bottom: 1px;
}

/* property toolbar */
.props {
  display: flex;
  gap: 2px;
  padding: 4px 0;
}
.panel {
  display: flex;
  height: 40px;
  border: 1px solid var(--edge);
}
.panel > .dots {
  margin: 4px 3px;
}
.layers {
  width: 464px;
}
.layers > button {
  width: 38px;
}
.drop {
  position: relative;
  padding-left: 3px;
}
.drop::before {
  content: "";
  position: absolute;
  left: 3px;
  top: 22px;
  bottom: 2px;
  border-left: 1px solid #888;
}
.drop-face {
  display: flex;
  align-items: center;
  gap: 4px;
  height: 22px;
  margin-left: -3px;
  padding: 0 2px;
  background: #ccc;
  border-bottom: 1px solid #bdbdbd;
  border-radius: 0 0 3px 3px;
  color: #777;
}
.drop select {
  flex: 1;
  min-width: 0;
  appearance: none;
}
.layer {
  flex: 1;
  margin-right: 1px;
}
.layer .drop-face svg:first-child {
  margin-top: 2px;
}
.swatch {
  width: 14px;
  height: 14px;
  background: #808080;
  border: 1px solid #222;
}
.rule {
  width: 60px;
  margin: 0 2px;
  border-top: 1px solid #000;
}
.rule.short {
  width: 36px;
}
.styles > .dots {
  margin-right: 1px;
}
.color {
  width: 154px;
}
.ltype,
.lweight,
.pstyle {
  margin-left: 3px;
}
.color,
.ltype,
.lweight {
  border-right: 1px solid #888;
}
.color .drop-face,
.ltype .drop-face,
.lweight .drop-face {
  margin-right: 3px;
}
.ltype {
  width: 162px;
}
.lweight {
  width: 128px;
}
.pstyle {
  width: 119px;
}
.pstyle select {
  padding-left: 7px;
}

/* work area */
.work {
  position: relative;
  display: flex;
  flex: 1;
  padding-right: 1px;
}
.tools {
  width: 42px;
  padding: 0 2px;
  border: 1px solid var(--edge);
  border-bottom: 0;
}
.tools button {
  width: 34px;
  height: 38px;
}
.tools svg {
  width: 34px;
  height: 38px;
}
.view {
  display: grid;
  flex: 1;
  grid-template: 1fr 17px / 1fr 18px;
  margin: 0 3px;
  background: #f0f0f0;
}
.canvas {
  position: relative;
  overflow: hidden;
  background: #000;
}
.drawing {
  position: absolute;
  top: 0;
  left: 0;
}
.glow {
  fill: none;
  stroke: #2450a8;
  stroke-width: 4;
  stroke-opacity: 0.7;
}
.core {
  fill: none;
  stroke: #7f9ad6;
}
.ucs {
  fill: #ddd;
  font: 300 20px "Open Sans", sans-serif;
}

.scroll {
  display: flex;
  align-items: center;
}
.scroll.v {
  flex-direction: column;
  gap: 4px;
  padding: 4px 0;
}
.scroll.v .end {
  margin-top: auto;
}
.scroll.h {
  gap: 4px;
  padding: 0 3px;
}
.scroll .thumb {
  width: 16px;
  height: 16px;
  background: #cdcdcd;
}
.scroll.h .thumb {
  margin-left: auto;
}

.cube {
  position: absolute;
  top: 12px;
  right: 12px;
  display: grid;
  grid-template: 22px 1fr 22px / 22px 1fr 22px;
  width: 118px;
  height: 118px;
  place-items: center;
  color: #aaa;
  font: 16px/20px "Noto Sans CJK SC", sans-serif;
}
.cube::before {
  content: "";
  position: absolute;
  inset: 6px 8px 8px;
  border: 11px solid #2e2e2e;
  border-radius: 50%;
}
.cube > * {
  position: relative;
}
.cube .n,
.cube .s {
  grid-column: 1 / 4;
}
.face {
  width: 44px;
  height: 44px;
  background: #a3a3a3;
  color: #444;
  font-size: 24px;
}
.face span {
  width: 28px;
  height: 28px;
  background: #989aa0;
  line-height: 26px;
}
.wcs {
  position: absolute;
  top: 144px;
  right: 47px;
  gap: 7px;
  width: 48px;
  height: 17px;
  background: #8e8e94;
  border: 1px solid #aaa;
  border-radius: 4px;
  color: #444;
  font-size: 11px;
}
.navbar {
  position: absolute;
  top: 187px;
  right: 4px;
  background: #4d4d4d;
  border-radius: 4px;
}

/* dynamic input */
.dyn {
  position: absolute;
  top: 270px;
  left: 710px;
  display: flex;
  gap: 4px;
  align-items: flex-start;
  color: #000;
}
.prompt {
  width: 223px;
  height: 24px;
  padding: 0 3px;
  border: 1px solid #000;
  background: #999;
  line-height: 21px;
}
.coord {
  width: 87px;
  height: 22px;
  padding: 2px 3px;
  border: 1px solid #000;
  background: #999;
}
.coord.active {
  padding-right: 10px;
  background: linear-gradient(#0078d7, #0078d7) content-box, #fff;
  color: #fff;
}
.ring {
  position: absolute;
  top: 227px;
  left: 658px;
  width: 297px;
  height: 77px;
  border: 5px solid #e03030;
  border-radius: 38px;
}

/* command window */
kbd {
  font: 12px/12px "DejaVu Sans Mono", monospace;
  white-space: pre;
}
.history {
  position: absolute;
  left: 408px;
  bottom: 30px;
  display: flex;
  flex-direction: column;
  align-items: flex-start;
  gap: 5px;
  color: #ededed;
  font: 13px/15px "Liberation Sans", "Noto Sans CJK SC", sans-serif;
}
.history p {
  margin: 0;
  padding: 0 1px;
  background: linear-gradient(#4e4e4e, #666);
  border-radius: 2px;
}
.history .old {
  background: #484848;
  color: #adadad;
}
.history .mid {
  background: #565656;
  color: #ccc;
}
.cmd {
  position: absolute;
  left: 346px;
  bottom: 1px;
  display: flex;
  align-items: center;
  width: 419px;
  height: 26px;
  padding-left: 4px;
  background: var(--chrome);
  border-radius: 3px;
  color: #000;
  font: 13px/20px "Noto Sans CJK SC", sans-serif;
}
.cmd > button {
  width: 21px;
}
.cmd > .wrench {
  width: 27px;
}
.cmd-line {
  display: flex;
  flex: 1;
  align-items: center;
  align-self: stretch;
  gap: 3px;
  padding: 0 4px 0 3px;
  background: #fff;
}
.cmd-line b {
  font: bold 12px/12px "DejaVu Sans Mono", monospace;
}
.cmd-line label {
  white-space: nowrap;
}
.cmd-line input {
  flex: 1;
  width: 0;
  outline: 0;
}

/* status bar */
.status {
  display: flex;
  gap: 3px;
  height: 28px;
  padding-bottom: 2px;
  background: var(--chrome);
  border-top: 1px solid #c4c4c4;
}
.layouts {
  display: flex;
  flex: 1;
  align-items: flex-start;
  padding-left: 11px;
  line-height: 17px;
}
.layouts a {
  padding: 0 12px;
  background: #e4e4e4;
  border-radius: 0 0 10px 10px;
}
.layouts .on {
  background: var(--light);
  color: #222;
  font-weight: bold;
}
.layouts a:last-child {
  padding: 4px 10px 5px;
}
.group {
  display: flex;
  align-items: center;
  background: var(--light);
}
.group button {
  width: 24px;
  height: 22px;
}
.group .dd {
  width: 15px;
}
.group .model {
  width: 28px;
  color: #222;
}
.group .scale {
  width: 32px;
  gap: 3px;
  color: #333;
}
.group .lit {
  width: 22px;
  margin: 0 1px;
  background: #cce4f7;
  border: 1px solid #3a76b0;
}
.group.last {
  padding: 0 1px;
}
```
